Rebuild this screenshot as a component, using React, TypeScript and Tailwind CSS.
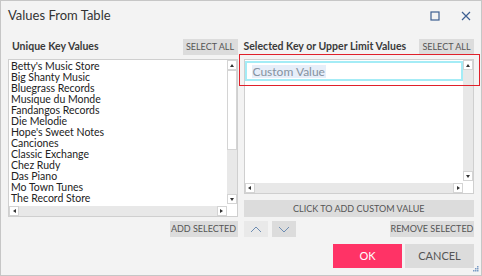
const stores = [
  "Betty's Music Store",
  'Big Shanty Music',
  'Bluegrass Records',
  'Musique du Monde',
  'Fandangos Records',
  'Die Melodie',
  "Hope's Sweet Notes",
  'Canciones',
  'Classic Exchange',
  'Chez Rudy',
  'Das Piano',
  'Mo Town Tunes',
  'The Record Store',
  "Rebecca's Sounds of Sweden",
];

function ArrowBox({ dir }: { dir: 'up' | 'down' | 'left' | 'right' }) {
  const shape = {
    up: 'border-x-[2.5px] border-x-transparent border-b-[3px] border-b-[#333]',
    down: 'border-x-[2.5px] border-x-transparent border-t-[3px] border-t-[#333]',
    left: 'border-y-[2.5px] border-y-transparent border-r-[3px] border-r-[#333]',
    right: 'border-y-[2.5px] border-y-transparent border-l-[3px] border-l-[#333]',
  }[dir];
  return (
    <div className="w-[10px] h-[10px] bg-white border border-[#d4d4d4] flex items-center justify-center shrink-0">
      <div className={`w-0 h-0 ${shape}`} />
    </div>
  );
}

function ListBox({
  items,
  height,
  thumb,
  children,
}: {
  items?: string[];
  height: string;
  thumb: boolean;
  children?: React.ReactNode;
}) {
  return (
    <div className={`relative ${height} border border-[#cfcfcf] bg-white flex flex-col`}>
      <div className="flex flex-1 min-h-0">
        <div className="flex-1 min-w-0 overflow-hidden pt-px">
          {children}
          {items?.map((item) => (
            <div key={item} className="h-[11px] leading-[11px] pl-[2px] text-[10.5px] text-[#222] whitespace-nowrap">
              {item}
            </div>
          ))}
        </div>
        <div className="w-[10px] flex flex-col bg-[#e8e8e8]">
          <ArrowBox dir="up" />
          {thumb ? <div className="h-[80px] bg-white border border-[#d4d4d4]" /> : null}
          <div className="flex-1" />
          <ArrowBox dir="down" />
        </div>
      </div>
      <div className="h-[10px] flex bg-[#e8e8e8] mt-[2px]">
        <ArrowBox dir="left" />
        <div className="flex-1" />
        <ArrowBox dir="right" />
        <div className="w-[10px] bg-white" />
      </div>
    </div>
  );
}

const btn =
  'h-[16px] bg-[#dcdcdc] text-[#555] text-[9px] uppercase whitespace-nowrap flex items-center justify-center';

export default function App() {
  return (
    <div className="relative w-[482px] h-[276px] bg-[#f3f3f3] border border-[#c6c6c6] font-['Lato',sans-serif] text-[#333] flex flex-col overflow-hidden">
      <div className="h-[29px] flex items-center pl-[7px] pr-[10px]">
        <span className="text-[13px] text-[#333] flex-1">Values From Table</span>
        <svg width="10" height="10" viewBox="0 0 10 10" className="mr-[21px]">
          <rect x="1" y="1" width="8" height="8" fill="none" stroke="#3d5f91" strokeWidth="1.2" />
        </svg>
        <svg width="10" height="10" viewBox="0 0 10 10">
          <path d="M1 1 L9 9 M9 1 L1 9" stroke="#3d5f91" strokeWidth="1.2" />
        </svg>
      </div>

      <div className="flex gap-[6px] pl-[7px] pr-[7px] mt-[9px]">
        <div className="w-[230px] flex flex-col">
          <div className="h-[16px] flex items-center justify-between mb-[4px]">
            <span className="pl-[4px] text-[10.5px] font-bold text-[#3a3a3a] whitespace-nowrap">Unique Key Values</span>
            <div className={`${btn} w-[55px]`}>Select All</div>
          </div>
          <ListBox items={stores} height="h-[158px]" thumb />
          <div className="flex justify-end mt-[4px]">
            <div className={`${btn} w-[68px]`}>Add Selected</div>
          </div>
        </div>

        <div className="w-[231px] flex flex-col">
          <div className="h-[16px] flex items-center justify-between mb-[4px]">
            <span className="text-[10.5px] font-bold text-[#3a3a3a] whitespace-nowrap">Selected Key or Upper Limit Values</span>
            <div className={`${btn} w-[55px]`}>Select All</div>
          </div>
          <ListBox height="h-[135px]" thumb={false}>
            <div className="h-[20px] border-2 border-[#a4ecf6] flex items-center pl-[5px]">
              <span className="bg-[#e7eef9] text-[12px] leading-[13px] text-[#8592a0] px-[1px]">Custom Value</span>
            </div>
          </ListBox>
          <div className={`${btn} h-[17px] mt-[6px]`}>Click to Add Custom Value</div>
          <div className="flex items-center mt-[4px] gap-[4px]">
            <div className="w-[24px] h-[16px] bg-[#e9e9e9] flex items-center justify-center">
              <svg width="12" height="7" viewBox="0 0 12 7">
                <path d="M1 6 L6 1 L11 6" fill="none" stroke="#6e8db3" strokeWidth="1" />
              </svg>
            </div>
            <div className="w-[24px] h-[16px] bg-[#dcdcdc] flex items-center justify-center">
              <svg width="12" height="7" viewBox="0 0 12 7">
                <path d="M1 1 L6 6 L11 1" fill="none" stroke="#6e8db3" strokeWidth="1" />
              </svg>
            </div>
            <div className="flex-1" />
            <div className={`${btn} w-[84px]`}>Remove Selected</div>
          </div>
          <div className="flex justify-end gap-[3px] mt-[7px]">
            <div className="w-[69px] h-[24px] bg-[#ff3366] text-white text-[11px] flex items-center justify-center">OK</div>
            <div className="w-[69px] h-[24px] bg-[#dcdcdc] text-[#555] text-[11px] flex items-center justify-center">CANCEL</div>
          </div>
        </div>
      </div>

      <div className="absolute left-[238px] top-[53px] w-[241px] h-[32px] border border-[#e0202a]" />

      <svg width="7" height="7" viewBox="0 0 7 7" className="absolute right-[2px] bottom-[2px]">
        <rect x="5" y="0" width="1.5" height="1.5" fill="#7b9cc6" />
        <rect x="3" y="2" width="1.5" height="1.5" fill="#7b9cc6" />
        <rect x="5" y="2" width="1.5" height="1.5" fill="#7b9cc6" />
        <rect x="1" y="4" width="1.5" height="1.5" fill="#7b9cc6" />
        <rect x="3" y="4" width="1.5" height="1.5" fill="#7b9cc6" />
        <rect x="5" y="4" width="1.5" height="1.5" fill="#7b9cc6" />
      </svg>
    </div>
  );
}
